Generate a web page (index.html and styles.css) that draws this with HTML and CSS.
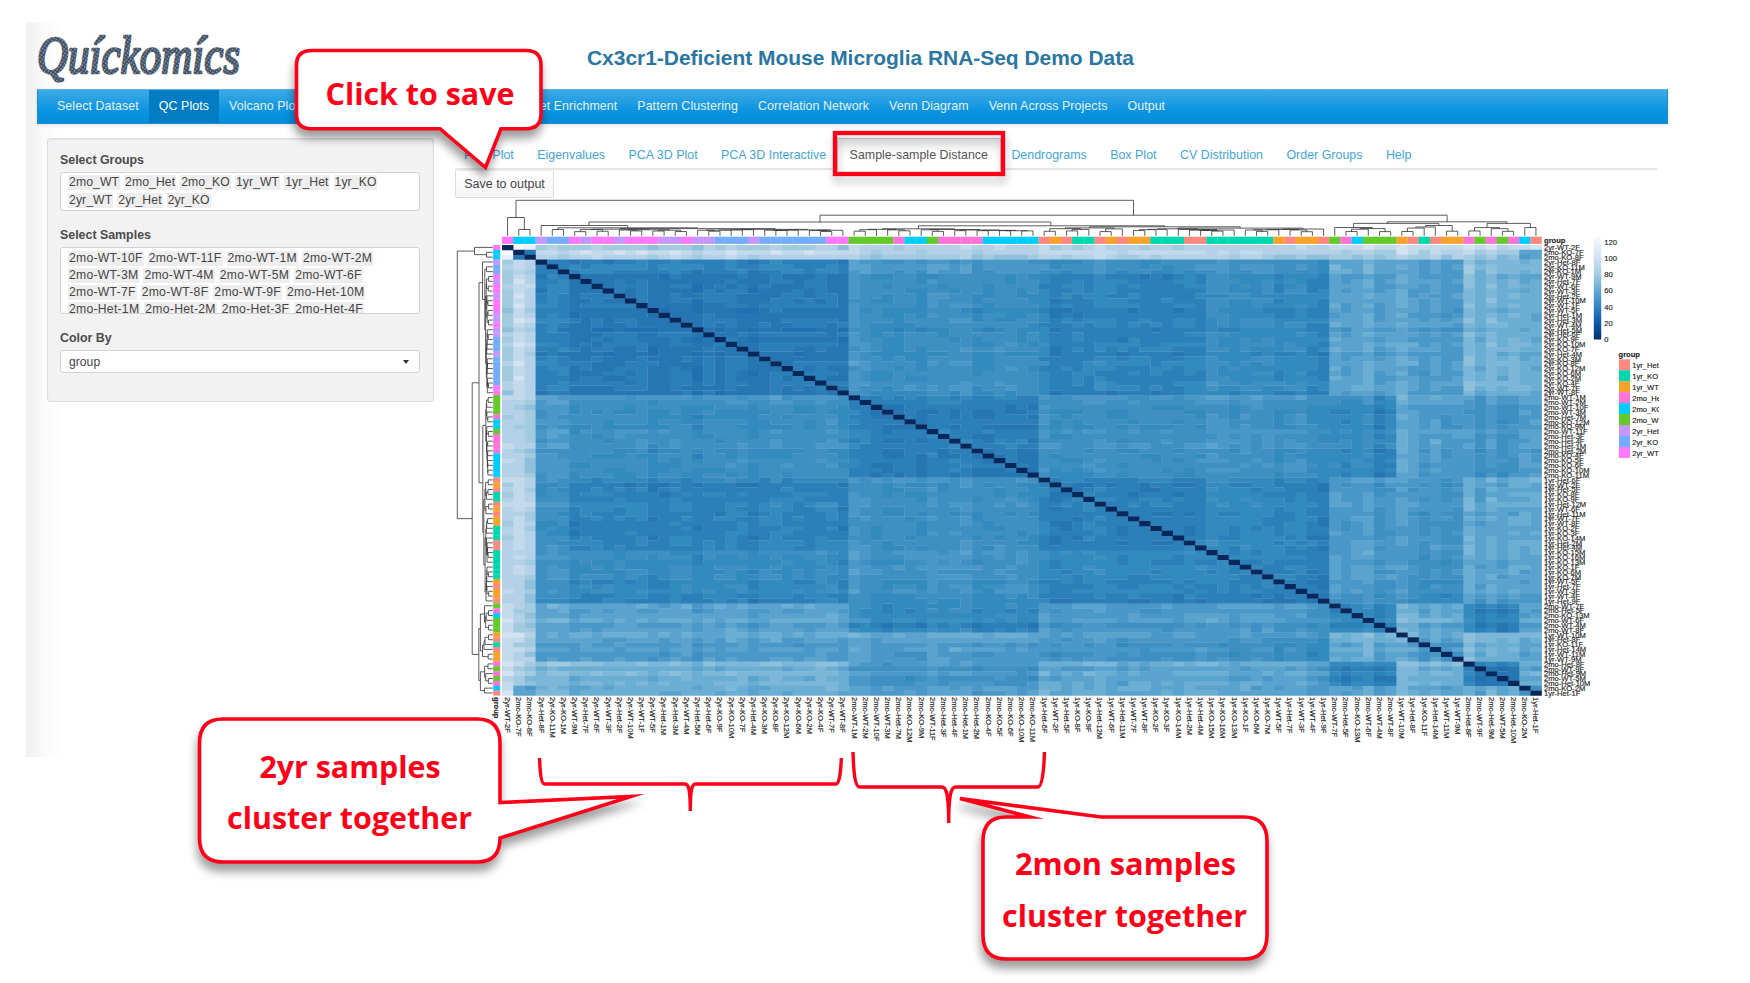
FILE: index.html
```html
<!DOCTYPE html>
<html lang="en">
<head>
<meta charset="utf-8">
<title>Quickomics</title>
<link rel="stylesheet" href="styles.css">
</head>
<body>
<div class="app">
  <header class="header">
    <svg class="logo" width="216" height="66" viewBox="0 0 216 66" aria-label="Quickomics">
      <defs>
        <pattern id="weave" width="3" height="3" patternUnits="userSpaceOnUse" patternTransform="rotate(35)">
          <rect width="3" height="3" fill="#3d4c60"/>
          <rect width="1.5" height="1.5" fill="#9aa7b4"/>
        </pattern>
      </defs>
      <text class="logo-text" x="0" y="44" textLength="203" lengthAdjust="spacingAndGlyphs">Quíckomícs</text>
    </svg>
    <h1 class="title">Cx3cr1-Deficient Mouse Microglia RNA-Seq Demo Data</h1>
  </header>
  <nav class="navbar">
    <a class="nav-item">Select Dataset</a>
    <a class="nav-item active">QC Plots</a>
    <a class="nav-item">Volcano Plot</a>
    <a class="nav-item">Heatmap</a>
    <a class="nav-item">Expression Plot</a>
    <a class="nav-item">Gene Set Enrichment</a>
    <a class="nav-item">Pattern Clustering</a>
    <a class="nav-item">Correlation Network</a>
    <a class="nav-item">Venn Diagram</a>
    <a class="nav-item">Venn Across Projects</a>
    <a class="nav-item">Output</a>
  </nav>
  <div class="content">
    <aside class="panel">
      <label class="label">Select Groups</label>
      <div class="box groups">
        <div class="tags"><span>2mo_WT</span><span>2mo_Het</span><span>2mo_KO</span><span>1yr_WT</span><span>1yr_Het</span><span>1yr_KO</span></div>
        <div class="tags"><span>2yr_WT</span><span>2yr_Het</span><span>2yr_KO</span></div>
      </div>
      <label class="label">Select Samples</label>
      <div class="box samples">
        <div class="tags"><span>2mo-WT-10F</span><span>2mo-WT-11F</span><span>2mo-WT-1M</span><span>2mo-WT-2M</span></div>
        <div class="tags"><span>2mo-WT-3M</span><span>2mo-WT-4M</span><span>2mo-WT-5M</span><span>2mo-WT-6F</span></div>
        <div class="tags"><span>2mo-WT-7F</span><span>2mo-WT-8F</span><span>2mo-WT-9F</span><span>2mo-Het-10M</span></div>
        <div class="tags"><span>2mo-Het-1M</span><span>2mo-Het-2M</span><span>2mo-Het-3F</span><span>2mo-Het-4F</span></div>
      </div>
      <label class="label">Color By</label>
      <div class="box select"><span>group</span><i class="caret"></i></div>
    </aside>
    <main class="main">
      <div class="tabs">
        <a class="tab">PCA Plot</a>
        <a class="tab">Eigenvalues</a>
        <a class="tab">PCA 3D Plot</a>
        <a class="tab">PCA 3D Interactive</a>
        <a class="tab current">Sample-sample Distance</a>
        <a class="tab">Dendrograms</a>
        <a class="tab">Box Plot</a>
        <a class="tab">CV Distribution</a>
        <a class="tab">Order Groups</a>
        <a class="tab">Help</a>
      </div>
      <button class="save">Save to output</button>
      <svg class="chart" id="chart" width="1204" height="558" viewBox="455 198 1204 558">
        <defs>
          <linearGradient id="scale" x1="0" y1="1" x2="0" y2="0">
            <stop offset="0" stop-color="#08306b"/>
            <stop offset="0.125" stop-color="#08519c"/>
            <stop offset="0.25" stop-color="#2171b5"/>
            <stop offset="0.375" stop-color="#4292c6"/>
            <stop offset="0.5" stop-color="#6baed6"/>
            <stop offset="0.625" stop-color="#9ecae1"/>
            <stop offset="0.75" stop-color="#c6dbef"/>
            <stop offset="0.875" stop-color="#deebf7"/>
            <stop offset="1" stop-color="#f7fbff"/>
          </linearGradient>
        </defs>
      </svg>
    </main>
  </div>
</div>

<svg class="notes" width="1750" height="983" viewBox="0 0 1750 983">
  <rect class="frame" x="835" y="133" width="168" height="41"/>
  <path class="brace" d="M539.5 758C540 770 541 784 544.500 784H685C689 784 690.300 792 690.300 811C690.300 792 691.500 784 695.500 784H836C839.500 784 841 770 841.300 758"/>
  <path class="brace" d="M853 752C853.500 768 854.500 787 859.500 787H942C947 787 948.700 798 948.700 823C948.700 798 950.500 787 955.500 787H1038C1042.500 787 1044 768 1044.500 752"/>
  <path class="bubble" d="M312 50.500H526Q541 50.500 541 65V114Q541 128.700 526 128.700H501L485.500 167.500L440 128.700H311Q296.500 128.700 296.500 114V65Q296.500 50.500 312 50.500Z"/>
  <path class="bubble" d="M223 719H477Q500 719 500 743V802.500L631 796.500L500 838Q500 862 477 862H223Q199.500 862 199.500 838V743Q199.500 719 223 719Z"/>
  <path class="bubble" d="M1006 817H1030L960 798.500L1101 817H1244Q1267 817 1267 841V935Q1267 959 1244 959H1006Q983 959 983 935V841Q983 817 1006 817Z"/>
  <text class="note" x="325.500" y="104.700" textLength="189" lengthAdjust="spacingAndGlyphs">Click to save</text>
  <text class="note" x="259.500" y="777.700" textLength="181" lengthAdjust="spacingAndGlyphs">2yr samples</text>
  <text class="note" x="227" y="828.500" textLength="245" lengthAdjust="spacingAndGlyphs">cluster together</text>
  <text class="note" x="1015" y="874.700" textLength="221" lengthAdjust="spacingAndGlyphs">2mon samples</text>
  <text class="note" x="1002" y="926.500" textLength="245" lengthAdjust="spacingAndGlyphs">cluster together</text>
</svg>
<script src="chart.js"></script>
</body>
</html>
```

FILE: styles.css
```css
* { box-sizing: border-box; }
body {
  margin: 0;
  padding-top: 22px;
  background: #fff;
  color: #444;
  font-family: "Liberation Sans", Arial, sans-serif;
  font-size: 12.4px;
  position: relative;
  width: 1750px;
  height: 983px;
  overflow: hidden;
}
.app {
  margin-left: 26px;
  padding: 7px 0 0 11px;
  height: 735px;
  background: linear-gradient(90deg, #f0f0f0 0, #fafafa 18px, #fff 36px);
}
.header { display: flex; height: 60px; }
.logo { flex: none; overflow: visible; }
.logo-text {
  font-family: "Liberation Serif", serif;
  font-style: italic;
  font-size: 52px;
  fill: url(#weave);
  stroke: url(#weave);
  stroke-width: 2.4px;
  stroke-linejoin: round;
}
.title {
  margin: 16.500px 0 0 334px;
  font-size: 20.95px;
  line-height: 24px;
  color: #2a76a3;
  white-space: nowrap;
}
.navbar {
  display: flex;
  width: 1631px;
  height: 35px;
  padding-left: 9px;
  border: 1px solid #1d8dd0;
  border-top-color: #5db3e3;
  background: linear-gradient(#3daae6, #0a93e0 65%, #028ddc);
  box-shadow: 0 1px 4px rgba(0, 0, 0, .12);
}
.nav-item {
  padding: 0 10px;
  line-height: 32px;
  letter-spacing: 0.085px;
  color: #e4f3fc;
  white-space: nowrap;
}
.nav-item.active { background: #027dc3; color: #fff; }
.content { display: flex; padding-left: 10px; margin-top: 13.500px; }
.panel {
  width: 387px;
  height: 264px;
  padding: 12.500px 13px 0 12px;
  border: 1px solid #ddd;
  border-radius: 3px;
  background: #f2f2f2;
  box-shadow: inset 0 1px 2px rgba(0, 0, 0, .06);
}
.label { display: block; height: 21px; line-height: 18px; font-weight: bold; color: #4c4c4c; }
.box {
  border: 1.500px solid #d2d2d2;
  border-radius: 3px;
  background: #fff;
  overflow: hidden;
  font-size: 12.2px;
  color: #444;
}
.groups { height: 39px; margin-bottom: 15px; padding: 2px 7px; }
.samples { height: 67px; margin-bottom: 15px; padding: 3px 7px; }
.tags { display: flex; gap: 4px; align-items: flex-start; }
.tags span { padding: 0 1px; background: #eee; line-height: 15px; }
.groups .tags { height: 18px; letter-spacing: 0.1px; }
.samples .tags { height: 17px; letter-spacing: 0.26px; }
.select {
  height: 23px;
  display: flex;
  align-items: center;
  justify-content: space-between;
  padding: 0 10px 0 8px;
}
.caret { border: 3.500px solid transparent; border-top: 4px solid #333; border-bottom: 0; }
.main { margin-left: 21px; width: 1204px; }
.tabs {
  display: flex;
  width: 1202px;
  height: 32px;
  border-bottom: 2px solid #e6e6e6;
}
.tab {
  padding: 0 11.700px;
  line-height: 34px;
  letter-spacing: 0.03px;
  color: #3fa5dd;
  white-space: nowrap;
}
.tab:first-child { padding-left: 9px; }
.tab.current {
  color: #555;
  height: 32px;
  margin: 0 -1px;
  border: 1px solid #ccc;
  border-width: 1px 1px 0;
  line-height: 32px;
  background: linear-gradient(#ececec, #fff 60%);
}
.save {
  display: block;
  width: 99px;
  height: 28px;
  padding: 0;
  border: 1px solid #ddd;
  border-top-color: #eee;
  border-radius: 2px;
  background: linear-gradient(#fff, #f6f6f6);
  font: 12.5px "Liberation Sans", Arial, sans-serif;
  color: #444;
}
.chart { display: block; font-family: "Liberation Sans", Arial, sans-serif; font-size: 7.6px; }
.chart text { fill: #222; stroke: #222; stroke-width: 0.15px; }
.chart .bold { font-weight: bold; }
.tree { fill: none; stroke: #333; stroke-width: 0.8px; }
.notes { position: absolute; left: 0; top: 0; }
.frame { fill: none; stroke: #ff0019; stroke-width: 4.300px; filter: drop-shadow(1px 6px 4px rgba(0, 0, 0, .25)); }
.brace { fill: none; stroke: #ff0019; stroke-width: 3.400px; stroke-linejoin: bevel; }
.bubble {
  fill: #fff;
  stroke: #ff0019;
  stroke-width: 3.600px;
  stroke-miterlimit: 8;
  filter: drop-shadow(-1px 8px 5px rgba(0, 0, 0, .38));
}
.note { font-family: "Open Sans", "Noto Sans", sans-serif; font-weight: bold; font-size: 31px; fill: #ff0019; }
```

FILE: chart.js
```js
(function () {
  var NS = 'http://www.w3.org/2000/svg';
  var svg = document.getElementById('chart');
  var X0 = 502, Y0 = 245, CW = 11.178, RH = 4.843;

  // Samples in clustering order
  var samples = ('2yr-WT-2F 2mo-KO-7F 2mo-KO-8F 2yr-Het-8F 2yr-KO-11M 2yr-KO-1M 2yr-WT-9M 2yr-Het-7F 2yr-WT-6F 2yr-WT-3F ' +
    '2yr-Het-2F 2yr-WT-10M 2yr-WT-1F 2yr-WT-5F 2yr-Het-1M 2yr-Het-3M 2yr-WT-4M 2yr-Het-5M 2yr-Het-6F 2yr-KO-9F 2yr-KO-10M ' +
    '2yr-KO-7F 2yr-Het-4M 2yr-KO-3M 2yr-KO-8F 2yr-KO-12M 2yr-KO-6M 2yr-KO-2M 2yr-KO-4F 2yr-WT-7F 2yr-WT-8F 2mo-WT-1M 2mo-WT-2M ' +
    '2mo-WT-10F 2mo-WT-3M 2mo-Het-7M 2mo-KO-12M 2mo-KO-9M 2mo-WT-11F 2mo-Het-3F 2mo-Het-4F 2mo-Het-1M 2mo-Het-2M 2mo-KO-4F ' +
    '2mo-KO-5F 2mo-KO-6F 2mo-KO-10M 2mo-KO-11M 1yr-Het-6F 1yr-WT-2F 1yr-Het-5F 1yr-KO-8F 1yr-KO-9F 1yr-Het-12M 1yr-WT-6F ' +
    '1yr-Het-11M 1yr-WT-7F 1yr-WT-8F 1yr-KO-2F 1yr-KO-3F 1yr-KO-14M 1yr-Het-2M 1yr-Het-4M 1yr-KO-15M 1yr-KO-16M 1yr-KO-13M ' +
    '1yr-KO-1F 1yr-KO-6M 1yr-KO-7M 1yr-WT-5F 1yr-Het-7F 1yr-WT-3F 1yr-WT-4F 1yr-Het-9F 2mo-WT-7F 2mo-Het-5F 2mo-KO-13M ' +
    '2mo-WT-6F 2mo-WT-4M 2mo-WT-8F 1yr-WT-10M 1yr-Het-8F 1yr-KO-11F 1yr-Het-14M 1yr-WT-11M 1yr-WT-9M 2mo-Het-8F 2mo-WT-9F ' +
    '2mo-Het-9M 2mo-WT-5M 2mo-Het-10M 2mo-KO-2M 1yr-Het-1F').split(' ');
  var N = samples.length;

  var groupColors = {
    '1yr_Het': '#ff8880', '1yr_KO': '#00d7b0', '1yr_WT': '#f5a32b', '2mo_Het': '#ff73d8', '2mo_KO': '#00ccff',
    '2mo_WT': '#62ca2a', '2yr_Het': '#c497fc', '2yr_KO': '#74acff', '2yr_WT': '#ff76ff'
  };
  var ramp = ['#08285c', '#1a67ad', '#2070b1', '#2676b4', '#2b80b9', '#338abe', '#3e90c2', '#4a98c8', '#5ba3cf', '#6baed3',
    '#7cb6d8', '#8fc0db', '#a3cbe0', '#b4d1e8', '#c3d9ec', '#d3e3f2', '#e9f1fa', '#f5f9fe'];

  function add(name, attrs, text) {
    var el = document.createElementNS(NS, name);
    for (var k in attrs) el.setAttribute(k, attrs[k]);
    if (text !== undefined) el.textContent = text;
    svg.appendChild(el);
    return el;
  }
  var seed = 7;
  function rnd() { seed = (seed * 16807) % 2147483647; return seed / 2147483647; }

  // Cluster of each sample and mean colour level between clusters
  //             A  B  C  c  D  E  e  F  G  H  I
  var starts = [0, 1, 3, 6, 31, 48, 63, 74, 80, 86, 91];
  var means = [
    [0],
    [17, 2],
    [12, 13.3, 4.3],
    [12, 13.5, 4.2, 3],
    [13, 12.5, 7, 5.7, 3.8],
    [13, 13.6, 5.8, 4.2, 6, 4.1],
    [13, 12.6, 6.2, 5, 6.1, 4.7, 4.2],
    [14, 12, 8.7, 7.8, 5, 7.2, 7, 4.6],
    [14, 12.8, 7.6, 7.3, 7.4, 6.6, 6, 8.6, 7.4],
    [14.3, 11.6, 10.2, 9.3, 6.4, 8.3, 7.9, 4.2, 9.3, 3.2],
    [14.8, 8, 9.4, 8.8, 7.6, 8.7, 8, 8, 8.6, 8.6, 7]
  ];
  function cluster(i) { var c = 0; while (c < 10 && starts[c + 1] <= i) c++; return c; }
  var offset = samples.map(function () { return (rnd() - 0.5) * 1.1; });
  [[77, 0.8], [78, -0.8], [80, 1.2], [63, 0.6], [31, 0.8], [72, -0.6], [73, -0.9], [69, -0.4], [86, 0.9], [0, 0], [1, 0.6], [2, -0.6], [91, -0.2], [92, -0.1]]
    .forEach(function (p) { offset[p[0]] = p[1]; });
  var paths = ramp.map(function () { return ''; });
  function cell(r, c, v) {
    paths[v] += 'M' + (X0 + c * CW).toFixed(2) + ' ' + (Y0 + r * RH).toFixed(2) + 'h' + (CW + 0.3) + 'v' + (RH + 0.3) + 'h-' + (CW + 0.3) + 'z';
  }
  for (var r = 0; r < N; r++) {
    for (var c = 0; c <= r; c++) {
      var v = 0;
      if (r !== c) {
        v = means[cluster(r)][cluster(c)] + offset[r] + offset[c] + (rnd() - 0.5) * 1.2;
        v = Math.max(1, Math.min(17, Math.round(v)));
      }
      cell(r, c, v);
      if (r !== c) cell(c, r, v);
    }
  }
  for (var p = ramp.length - 1; p >= 0; p--) add('path', { d: paths[p], fill: ramp[p] });

  // Group strips and labels
  samples.forEach(function (s, i) {
    var parts = s.split('-'), col = groupColors[parts[0] + '_' + parts[1]];
    add('rect', { x: X0 + i * CW, y: 236.7, width: CW + 0.2, height: 7.2, fill: col });
    add('rect', { x: 493.2, y: Y0 + i * RH, width: 7, height: RH + 0.2, fill: col });
    add('text', { x: 1544, y: Y0 + i * RH + 5.2 }, s);
    add('text', { transform: 'translate(' + (X0 + (i + 0.5) * CW - 2.6) + ' 697) rotate(90)' }, s);
  });
  add('text', { x: 1544, y: 243, 'class': 'bold' }, 'group');
  add('text', { transform: 'translate(493.5 697) rotate(90)', 'class': 'bold' }, 'group');

  // Dendrogram: a node is [height, left, right, optional centre], a leaf is its index
  function gen(lo, hi, h) {
    var n = hi - lo + 1;
    if (n === 1) return lo;
    if (n === 2) return [230.5 + rnd() * 1.2, lo, hi];
    var k = n > 8 ? Math.round(n * (0.25 + rnd() * 0.3)) : 1 + Math.floor(rnd() * (n - 1));
    var next = h + Math.max(0.15, (230.5 - h) * 0.3);
    return [h, gen(lo, lo + k - 1, next), gen(lo + k, hi, next + 0.2)];
  }
  var tree = [200.3,
    [217.5, 0, [229.5, 1, 2]],
    [215.2,
      [222,
        [225.5, 3, [227.8, [229.5, 4, 5], gen(6, 30, 228.6)], 7.78],
        [225.8, gen(31, 47, 228.8), gen(48, 73, 226.8), 49.1], 28.45],
      [221.8,
        [223.4, gen(74, 79, 227.5), gen(80, 85, 225.5), 79.2],
        [223.4, gen(86, 90, 227.6), [227.5, 91, 92], 89.9], 84.55], 56.5]];
  var top = '', left = '';
  function draw(node) {
    if (typeof node === 'number') return [node + 0.5, 235.8];
    var a = draw(node[1]), b = draw(node[2]), h = node[0];
    top += 'M' + (X0 + a[0] * CW) + ' ' + a[1] + 'V' + h + 'H' + (X0 + b[0] * CW) + 'V' + b[1];
    left += 'M' + (a[1] + 257) + ' ' + (Y0 + a[0] * RH) + 'H' + (h + 257) + 'V' + (Y0 + b[0] * RH) + 'H' + (b[1] + 257);
    return [node[3] || (a[0] + b[0]) / 2, h];
  }
  draw(tree);
  add('path', { d: top, 'class': 'tree' });
  add('path', { d: left, 'class': 'tree' });

  // Legends
  add('rect', { x: 1593.8, y: 237, width: 7.4, height: 102.5, fill: 'url(#scale)' });
  [120, 100, 80, 60, 40, 20, 0].forEach(function (t, i) {
    add('text', { x: 1604.3, y: 245 + i * 16.15 }, t);
  });
  add('text', { x: 1618.5, y: 357, 'class': 'bold' }, 'group');
  Object.keys(groupColors).forEach(function (g, i) {
    add('rect', { x: 1619, y: 359.3 + i * 10.95, width: 11, height: 11.1, fill: groupColors[g] });
    add('text', { x: 1632.3, y: 368 + i * 10.95 }, g);
  });
})();
```
